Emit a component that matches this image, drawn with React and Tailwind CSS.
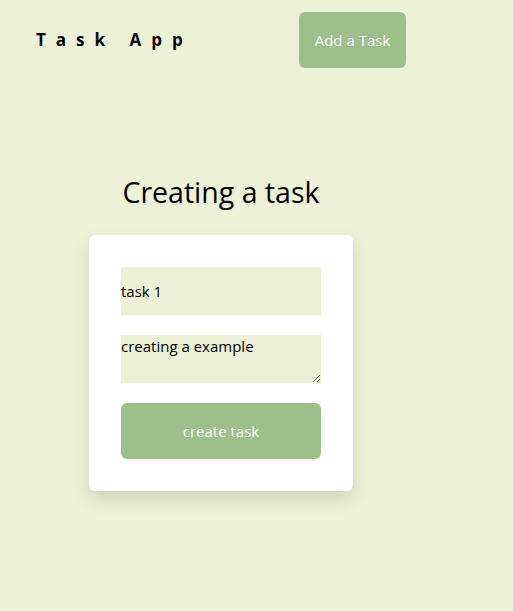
export default function App() {
  return (
    <div
      className="min-h-[611px] w-full bg-[#edf1d6] text-black"
      style={{ fontFamily: '"Open Sans", "Noto Sans", sans-serif' }}
    >
      <header className="flex items-center pt-3">
        <div className="ml-[36px] w-[263px] text-[17px] font-bold tracking-[10px]">
          Task App
        </div>
        <button className="h-[56px] w-[107px] rounded-[6px] bg-[#9dc08b] text-[15px] text-white">
          Add a Task
        </button>
      </header>
      <main className="ml-[89px] mt-[104px] flex w-[264px] flex-col items-center">
        <h1 className="text-[28.5px] leading-[40px]">Creating a task</h1>
        <div className="mt-[23px] flex w-[264px] flex-col gap-5 rounded-[6px] bg-white p-8 shadow-[0_8px_18px_rgba(0,0,0,0.13)]">
          <input
            className="h-[48px] w-[200px] bg-[#edf1d6] text-[15px] outline-none"
            defaultValue="task 1"
          />
          <textarea
            className="h-[48px] w-[200px] resize-y bg-[#edf1d6] text-[15px] leading-[22px] outline-none"
            defaultValue="creating a example"
          />
          <button className="h-[56px] w-[200px] rounded-[6px] bg-[#9dc08b] text-[15px] text-white">
            create task
          </button>
        </div>
      </main>
    </div>
  );
}
